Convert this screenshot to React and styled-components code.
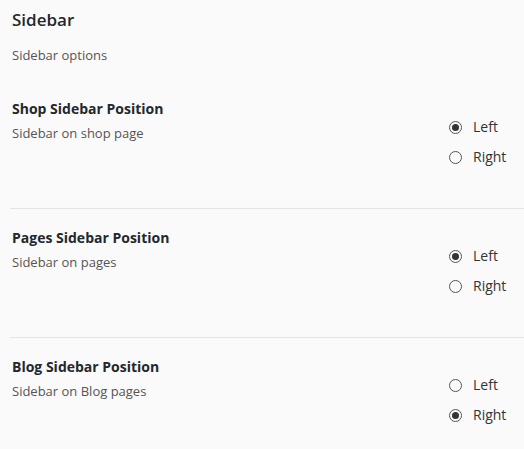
import React from "react";
import styled, { createGlobalStyle } from "styled-components";

const Global = createGlobalStyle`
  html, body { margin: 0; padding: 0; background: #fafafa; }
  body { font-family: "Open Sans", "Noto Sans", sans-serif; color: #333; }
`;

const Page = styled.div`
  padding: 8px 0 0 12px;
`;

const Title = styled.h2`
  margin: 0;
  font-size: 17px;
  font-weight: 600;
  color: #23282d;
  line-height: 24px;
`;

const Subtitle = styled.p`
  margin: 14px 0 0;
  font-size: 13px;
  color: #555;
  line-height: 18px;
`;

const Sections = styled.div`
  margin-top: 35px;
`;

const Section = styled.div`
  display: flex;
  justify-content: space-between;
  padding: ${(p) => (p.$first ? "0" : "19px")} 0 0 2px;
  height: 109px;
  border-top: ${(p) => (p.$first ? "none" : "1px solid #e4e4e4")};
  margin-left: -2px;
`;

const Info = styled.div``;

const Label = styled.h3`
  margin: 0;
  font-size: 14px;
  font-weight: 700;
  color: #23282d;
  line-height: 20px;
`;

const Desc = styled.p`
  margin: 5px 0 0;
  font-size: 13px;
  color: #555;
  line-height: 18px;
`;

const Options = styled.div`
  display: flex;
  flex-direction: column;
  gap: 10px;
  width: 75px;
  padding-top: 18px;
`;

const Option = styled.label`
  display: flex;
  align-items: center;
  gap: 11px;
  font-size: 14px;
  color: #333;
  line-height: 20px;
`;

const Circle = styled.span`
  width: 11px;
  height: 11px;
  border: 1px solid #555;
  border-radius: 50%;
  display: flex;
  align-items: center;
  justify-content: center;
  flex: none;
  &::after {
    content: "";
    width: 7px;
    height: 7px;
    border-radius: 50%;
    background: ${(p) => (p.$checked ? "#333" : "transparent")};
  }
`;

const data = [
  { title: "Shop Sidebar Position", desc: "Sidebar on shop page", value: "Left" },
  { title: "Pages Sidebar Position", desc: "Sidebar on pages", value: "Left" },
  { title: "Blog Sidebar Position", desc: "Sidebar on Blog pages", value: "Right" },
];

export default function App() {
  return (
    <>
      <Global />
      <Page>
        <Title>Sidebar</Title>
        <Subtitle>Sidebar options</Subtitle>
        <Sections>
          {data.map((d, i) => (
            <Section key={d.title} $first={i === 0}>
              <Info>
                <Label>{d.title}</Label>
                <Desc>{d.desc}</Desc>
              </Info>
              <Options>
                {["Left", "Right"].map((o) => (
                  <Option key={o}>
                    <Circle $checked={d.value === o} />
                    {o}
                  </Option>
                ))}
              </Options>
            </Section>
          ))}
        </Sections>
      </Page>
    </>
  );
}
